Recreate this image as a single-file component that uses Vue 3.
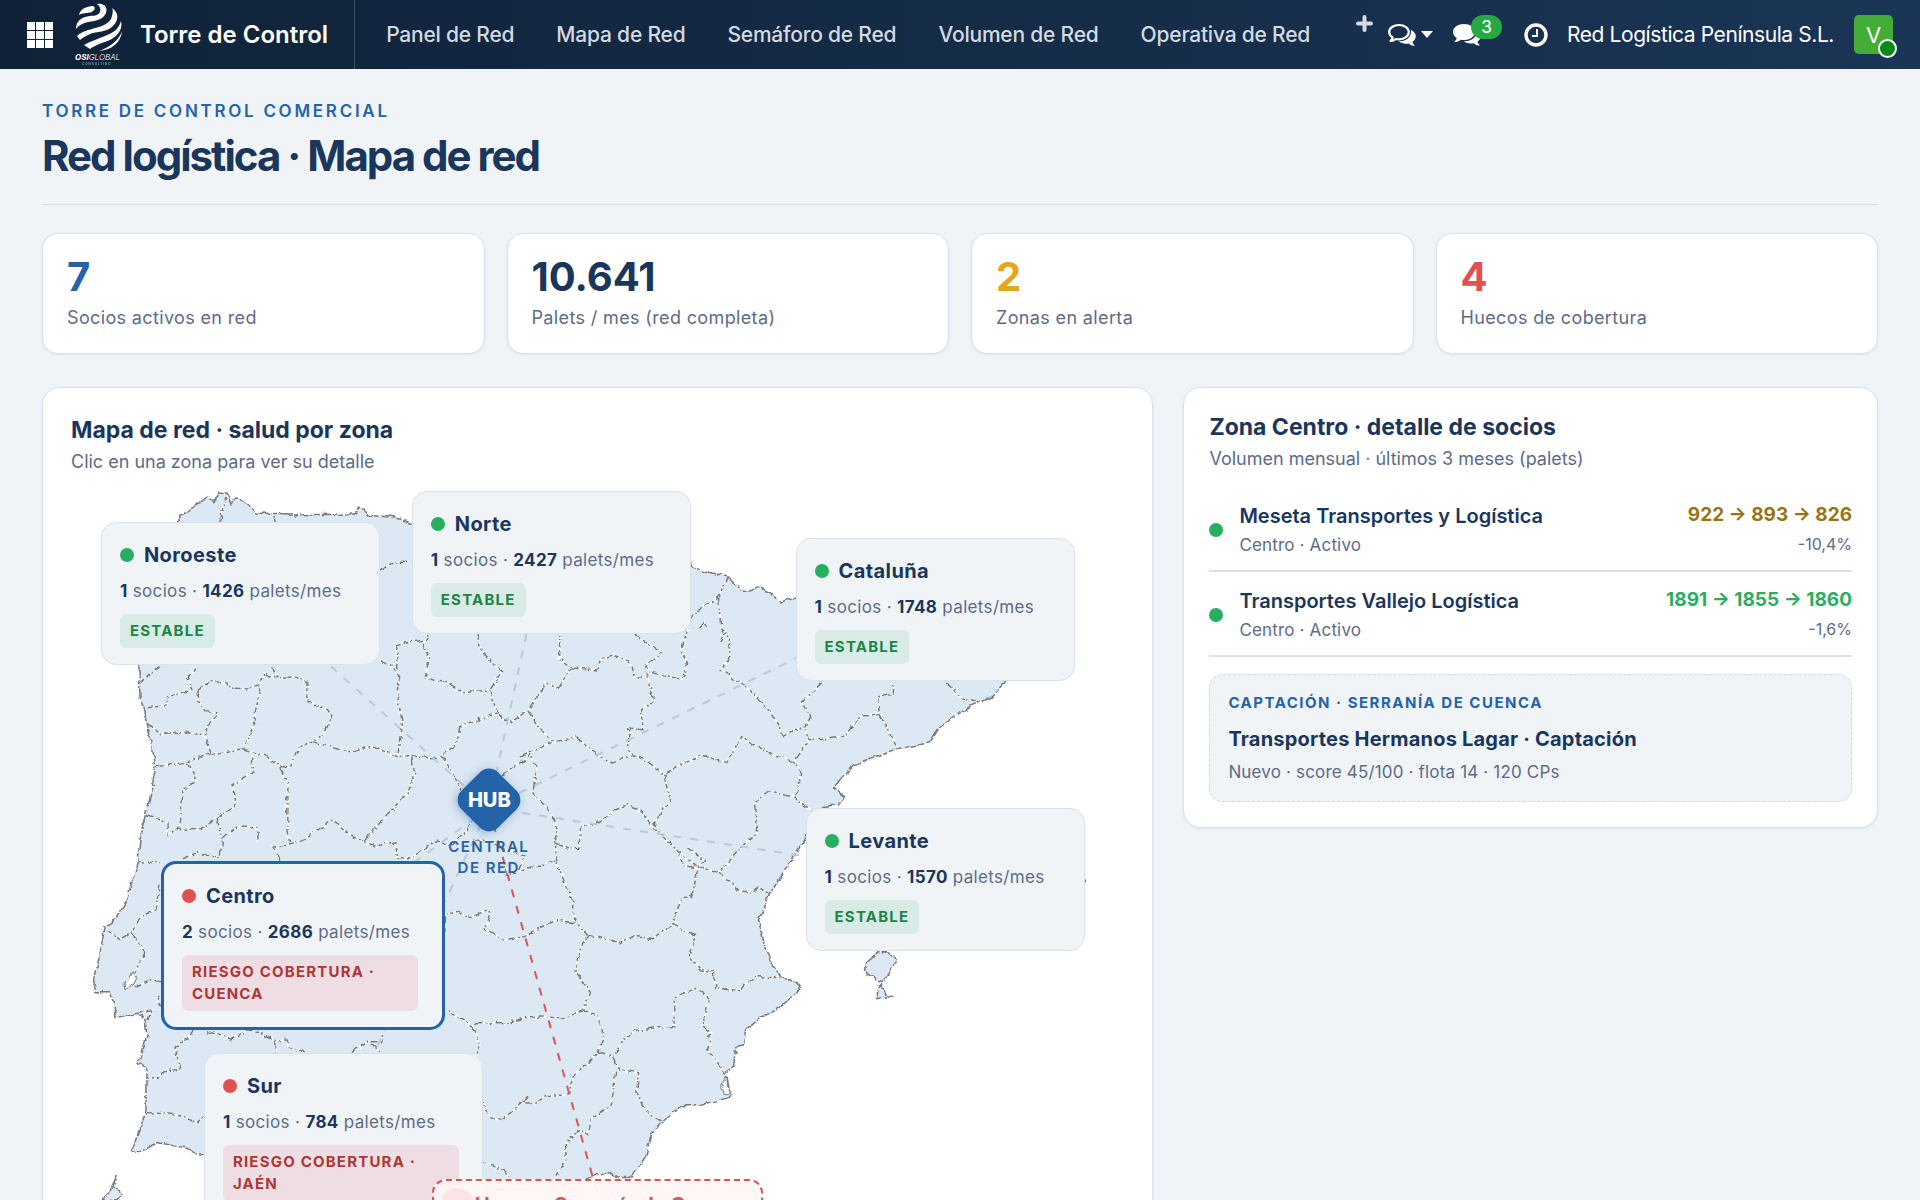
<script setup>
import { ref } from 'vue'

const menu = ['Panel de Red', 'Mapa de Red', 'Semáforo de Red', 'Volumen de Red', 'Operativa de Red']

const kpis = [
  { value: '7', label: 'Socios activos en red', tone: 'blue' },
  { value: '10.641', label: 'Palets / mes (red completa)', tone: 'navy' },
  { value: '2', label: 'Zonas en alerta', tone: 'amber' },
  { value: '4', label: 'Huecos de cobertura', tone: 'red' }
]

// Map canvas, in the same units as the SVG viewBox
const view = { x: 71, y: 485, w: 1054, h: 840 }

const zones = [
  { name: 'Noroeste', partners: 1, pallets: 1426, status: 'Estable', tone: 'ok', x: 101, y: 522 },
  { name: 'Norte', partners: 1, pallets: 2427, status: 'Estable', tone: 'ok', x: 412, y: 491 },
  { name: 'Cataluña', partners: 1, pallets: 1748, status: 'Estable', tone: 'ok', x: 796, y: 538 },
  { name: 'Levante', partners: 1, pallets: 1570, status: 'Estable', tone: 'ok', x: 806, y: 808 },
  { name: 'Centro', partners: 2, pallets: 2686, status: 'Riesgo cobertura · Cuenca', tone: 'risk', x: 161, y: 861 },
  { name: 'Sur', partners: 1, pallets: 784, status: 'Riesgo cobertura · Jaén', tone: 'risk', x: 204, y: 1053 }
]
const selected = ref('Centro')

const hub = { x: 489, y: 808 }
const links = [[240, 585], [527, 633], [900, 608], [900, 871], [302, 945], [334, 1140]]

const place = (p) => ({
  left: ((p.x - view.x) / view.w) * 100 + '%',
  top: ((p.y - view.y) / view.h) * 100 + '%'
})

const land = '179,522 179,515 188,512 197,505 202,500 208,497 213,502 220,493 227,494 231,503 236,498 242,500 252,507 258,514 290,515 353,514 360,507 368,515 388,517 400,519 410,523 470,530 560,540 640,550 691,562 692,567 711,574 729,577 742,590 750,591 759,587 771,593 780,602 796,597 900,620 1020,640 1012,670 1006,683 990,699 979,703 956,716 941,726 930,743 897,749 872,758 854,765 843,777 834,788 845,797 838,805 822,807 805,840 794,857 782,877 769,895 759,920 765,947 773,967 782,978 796,982 800,990 780,1008 761,1017 746,1030 744,1045 736,1047 734,1065 727,1073 730,1093 732,1097 715,1102 700,1105 683,1105 662,1122 652,1133 646,1157 639,1167 631,1178 619,1178 612,1173 604,1174 595,1176 570,1185 540,1182 510,1186 470,1200 400,1240 330,1230 280,1190 203,1154 183,1148 158,1143 137,1154 132,1153 138,1137 146,1112 146,1067 139,1063 147,1037 145,1020 137,1013 116,1018 115,1003 110,993 96,993 94,983 98,963 105,928 103,927 113,922 125,905 132,883 138,862 140,840 147,813 156,767 148,727 140,697 139,667 130,600 150,560'

const islands = [
  '887,952 897,960 889,975 880,982 869,975 865,970 867,963 880,952',
  '882,983 882,988 888,997 877,999 878,992',
  '117,1177 113,1188 123,1193 117,1200 102,1202 109,1194',
  '1085,878 1086,880 1084,880'
]

const borders = [
  '220,522 221,512 225,498', '273,517 275,524', '380,569 393,563 410,562',
  '140,684 152,673 160,667', '147,708 165,706 168,697 192,690 188,680 196,667',
  '197,691 210,682 227,682 233,688 247,689 260,686 263,673 273,678 293,677 307,680 307,702 323,707 333,715 325,732 313,742',
  '273,667 277,677', '197,691 198,702 207,712 216,713 205,733 211,754 243,749 253,727 260,688',
  '147,723 160,735 190,732 205,737', '157,767 188,762 211,754',
  '188,762 196,780 183,792 180,829 198,830 217,818 235,807 233,785 252,773 253,755',
  '147,815 167,823 168,835 179,828', '243,749 265,756 280,767 290,767 300,747 313,742',
  '313,742 350,753 373,746 398,757 402,720 397,693 400,677 390,665 378,660',
  '397,670 397,647 413,642 427,640 427,633',
  '423,643 430,657 425,678 447,683 463,693 490,690 497,713 460,727 457,743 442,757 430,758 413,755 398,757',
  '477,633 482,653 503,672 490,690', '497,713 512,723 528,712 547,683 558,688 572,668 560,660 560,635',
  '442,757 457,780 462,793', '412,757 415,773 408,793 385,817 367,837',
  '280,768 288,783 288,830 290,846', '217,818 223,838 237,827 257,828 257,842',
  '280,860 273,847 290,845 305,840 332,820 353,837 377,847 395,843 397,858 413,858 437,840 450,847 467,830 472,820',
  '365,842 385,817', '502,775 530,755 537,770 533,792 545,806 556,820 556,843 556,862 574,903 574,923 589,935',
  '528,712 540,728 553,742 577,738 610,763 635,755 648,762 665,775 700,755 727,762 742,737 753,743 775,756 794,762',
  '520,757 553,742', '646,672 654,700 642,710 642,730 629,728 629,753 635,756',
  '572,668 597,670 602,658 614,655 629,662 635,677 648,677',
  '635,635 662,652 646,667 650,672 681,679 688,665 681,647 688,630 692,615 719,597 729,577',
  '719,597 721,627 730,635 729,660 721,670 746,687 771,712 784,735 803,728',
  '699,627 705,622 708,628', '720,643 726,632 731,638',
  '822,683 803,702 811,717 805,728 809,740 794,762 801,773 799,790 794,797',
  '809,740 845,736 862,715 880,715 878,697 893,693 893,683', '880,715 893,738 897,749',
  '947,683 962,698 979,703', '665,775 671,800 660,813 654,828',
  '556,843 570,849 579,850 581,827 598,823 612,812 629,804 642,812 654,828 677,850 698,868 721,872 742,847 757,833 755,803 769,792 794,797 811,810',
  '677,850 684,866 698,868', '688,848 706,862 698,868', '719,873 738,890 750,893 759,887 769,893',
  '698,870 692,897 681,900 673,925 696,935 690,957 700,970 715,972 715,988 740,992 745,985 757,977 782,978',
  '555,862 535,866 520,872', '574,923 558,920 540,928 525,937 503,940 485,930 492,912 483,912 472,918 457,912 445,915 444,933',
  '589,935 620,943 635,935 652,940 673,925',
  '589,935 579,953 575,972 591,993 583,1010 566,1018 530,1017 507,1023 477,1023 473,1027 460,1018 445,1010',
  '583,1010 598,1015 604,1037 598,1053 574,1077 570,1095 547,1097 535,1103 520,1104 528,1098 503,1120 490,1117 483,1102',
  '598,1053 614,1058 623,1040 635,1032 658,1027 673,1028 675,997 696,989 709,998 704,1027 711,1033 708,1050 727,1075',
  '614,1058 620,1070 639,1073 637,1093 648,1113 662,1122',
  '616,1072 612,1105 591,1120 589,1135 577,1130 564,1147 566,1160 556,1178',
  '138,862 160,863', '182,860 198,853 220,857 223,838',
  '473,840 490,842 513,853 525,857 518,872 507,877 503,867', '527,868 555,862',
  '160,885 155,910 140,918 132,933 120,940 108,932', '132,933 145,953 135,973',
  '135,987 150,980 160,982', '160,995 157,1003 160,1008', '137,1013 152,1010 148,1020 141,1015',
  '193,1030 190,1038 175,1048 180,1070 163,1071 157,1080 147,1077',
  '147,1113 177,1115 197,1123 204,1117', '208,1032 233,1040 247,1030 260,1032 275,1042 287,1040 290,1048 305,1052',
  '275,1042 275,1053', '353,1052 367,1042 382,1042 383,1032', '372,1044 380,1052',
  '473,1027 480,1045 475,1056', '483,1161 497,1167 510,1177', '888,997 896,998'
]

const partners = [
  { name: 'Meseta Transportes y Logística', meta: 'Centro · Activo', trend: '922 → 893 → 826', delta: '-10,4%', tone: 'warn' },
  { name: 'Transportes Vallejo Logística', meta: 'Centro · Activo', trend: '1891 → 1855 → 1860', delta: '-1,6%', tone: 'good' }
]
</script>

<template>
  <div class="app">
    <header class="topbar">
      <button class="icon-btn apps" aria-label="Aplicaciones">
        <svg width="26" height="26" viewBox="0 0 26 26" fill="#fff">
          <template v-for="r in 3" :key="r">
            <rect v-for="c in 3" :key="c" :x="(c - 1) * 9" :y="(r - 1) * 9" width="8" height="8" />
          </template>
        </svg>
      </button>
      <svg class="logo" width="50" height="64" viewBox="74 3 50 64" fill="#fff" role="img" aria-label="OSI Global Consulting">
        <path d="M79 15C80 10 84 7 92 6C95 6 96 9 93 11C90 14 84 12 79 15Z" />
        <path d="M97 4C104 3 108 7 106 13C103 20 95 21 88 22C83 23 79 25 76 29C76 23 79 19 85 17C91 15 98 17 100 12C101 9 100 6 97 4Z" />
        <path d="M112 8C119 13 119 20 113 26C106 33 97 31 90 34C86 36 82 38 80 40L77 36C82 31 89 30 95 28C104 26 111 22 112 16C113 12 113 10 112 8Z" />
        <path d="M121 21C123 29 118 36 110 40C103 43 97 44 90 49L84 45C91 41 98 39 105 36C113 33 119 29 121 21Z" />
        <path d="M122 31C121 42 112 50 99 51C108 48 119 41 122 31Z" />
        <text x="75" y="60" font-size="8" font-style="italic" font-family="Inter, sans-serif"><tspan font-weight="700">OSI</tspan><tspan font-weight="300">GLOBAL</tspan></text>
        <text x="82" y="65" font-size="3" letter-spacing="1" opacity=".7" font-family="Inter, sans-serif">CONSULTING</text>
      </svg>
      <a href="#" class="brand">Torre de Control</a>
      <nav class="menu">
        <a v-for="m in menu" :key="m" href="#">{{ m }}</a>
      </nav>
      <div class="tools">
        <button class="icon-btn plus" aria-label="Nuevo">
          <svg width="17" height="17" viewBox="0 0 17 17"><path d="M8.500 2v13M2 8.500h13" stroke="#d3dae2" stroke-width="4" stroke-linecap="round" /></svg>
        </button>
        <button class="icon-btn chats" aria-label="Conversaciones">
          <svg width="28" height="24" viewBox="0 0 28 24">
            <path d="M11 2C5.500 2 1.200 5 1.200 9c0 2.200 1.400 4.200 3.500 5.500C4.500 16 3.500 17 2.500 18c2.200 0 4-.8 5.500-2 1 .2 2 .3 3 .3 5.500 0 9.800-3.200 9.800-7.200S16.500 2 11 2Z" fill="none" stroke="#fff" stroke-width="2.200" stroke-linejoin="round" />
            <path d="M23 7c3 1.400 4.800 3.600 4.800 6.200 0 2.200-1.300 4.200-3.300 5.500.3 1.600 1.200 2.800 2.500 4-2.600 0-4.800-.9-6.300-2.300-4 .7-7.600-.2-10-2.200C18 18.500 24 14 23 7Z" fill="#fff" />
          </svg>
          <svg width="12" height="7" viewBox="0 0 12 7"><path d="M0 0h12L6 7Z" fill="#fff" /></svg>
        </button>
        <button class="icon-btn messages" aria-label="Mensajes">
          <svg width="28" height="24" viewBox="0 0 28 24" fill="#fff">
            <path d="M11 1C5 1 0 4.500 0 9c0 2.400 1.400 4.500 3.700 6C3.500 16.500 2.500 17.600 1.200 19c2.600 0 5-.9 6.600-2.300 1 .2 2.100.3 3.200.3 6 0 11-3.500 11-8S17 1 11 1Z" />
            <path d="M23.800 7c2.500 1.400 4 3.500 4 6 0 2.300-1.300 4.300-3.300 5.600.3 1.600 1.200 2.800 2.500 4-2.600 0-4.800-.9-6.300-2.300-4 .7-7.600-.2-10-2C18.500 18.600 24.500 14 23.800 7Z" />
          </svg>
          <span class="count">3</span>
        </button>
        <button class="icon-btn clock" aria-label="Actividades">
          <svg width="24" height="24" viewBox="0 0 24 24" fill="none" stroke="#fff"><circle cx="12" cy="12" r="10" stroke-width="3.400" /><path d="M13 6v7H8" stroke-width="2" /></svg>
        </button>
        <a href="#" class="company">Red Logística Península S.L.</a>
        <button class="avatar" aria-label="Usuario">V<span class="online"></span></button>
      </div>
    </header>

    <main class="page">
      <div class="heading">
        <p class="eyebrow">Torre de control comercial</p>
        <h1>Red logística · Mapa de red</h1>
      </div>

      <section class="kpis">
        <article v-for="k in kpis" :key="k.label" class="kpi">
          <strong :class="k.tone">{{ k.value }}</strong>
          <span>{{ k.label }}</span>
        </article>
      </section>

      <div class="columns">
        <section class="panel map-panel">
          <h2>Mapa de red · salud por zona</h2>
          <p class="sub">Clic en una zona para ver su detalle</p>
          <div class="stage">
            <svg class="map" :viewBox="`${view.x} ${view.y} ${view.w} ${view.h}`" aria-hidden="true">
              <defs>
                <filter id="crinkle" x="-5%" y="-5%" width="110%" height="110%">
                  <feTurbulence type="fractalNoise" baseFrequency="0.1" numOctaves="3" seed="4" />
                  <feDisplacementMap in="SourceGraphic" scale="6" xChannelSelector="R" yChannelSelector="G" />
                </filter>
              </defs>
              <g filter="url(#crinkle)" stroke-linejoin="round">
                <polygon class="land" :points="land" />
                <polygon v-for="i in islands" :key="i" class="land" :points="i" />
                <polygon class="water" points="133,971 137,978 134,984 125,989 124,983 129,979" />
                <polygon class="water" points="727,1075 721,1087 724,1095 731,1095 728,1085" />
                <g v-for="b in borders" :key="b">
                  <polyline class="halo" :points="b" />
                  <polyline class="border" :points="b" />
                </g>
              </g>
              <line v-for="l in links" :key="l[0] + '-' + l[1]" class="link" :x1="hub.x" :y1="hub.y" :x2="l[0]" :y2="l[1]" />
              <line class="link gap" :x1="hub.x" :y1="hub.y" x2="605" y2="1220" />
            </svg>

            <div class="hub" :style="place({ x: 489, y: 801 })">
              <div class="diamond"><b>HUB</b></div>
              <span>Central de red</span>
            </div>

            <button
              v-for="z in zones"
              :key="z.name"
              class="zone"
              :class="[z.tone, { selected: selected === z.name }]"
              :style="place(z)"
              @click="selected = z.name"
            >
              <span class="zone-name"><i class="dot"></i>{{ z.name }}</span>
              <span class="zone-meta"><b>{{ z.partners }}</b> socios · <b>{{ z.pallets }}</b> palets/mes</span>
              <span class="badge">{{ z.status }}</span>
            </button>

            <button class="uncovered" :style="place({ x: 432, y: 1179 })">
              <i class="pulse"></i>
              <b>Hueco · Serranía de Cuenca</b>
            </button>
          </div>
        </section>

        <section class="panel detail">
          <h2>Zona Centro · detalle de socios</h2>
          <p class="sub">Volumen mensual · últimos 3 meses (palets)</p>
          <ul>
            <li v-for="p in partners" :key="p.name">
              <i class="dot"></i>
              <div class="who">
                <strong>{{ p.name }}</strong>
                <span>{{ p.meta }}</span>
              </div>
              <div class="trend" :class="p.tone">
                <strong>{{ p.trend }}</strong>
                <span>{{ p.delta }}</span>
              </div>
            </li>
          </ul>
          <div class="lead">
            <p class="lead-tag">Captación · Serranía de Cuenca</p>
            <strong>Transportes Hermanos Lagar · Captación</strong>
            <span>Nuevo · score 45/100 · flota 14 · 120 CPs</span>
          </div>
        </section>
      </div>
    </main>
  </div>
</template>

<style>
body {
  background: #f0f4f7;
}
</style>

<style scoped>
* {
  box-sizing: border-box;
}
.app {
  display: flex;
  flex-direction: column;
  height: 100vh;
  font-family: Inter, 'Noto Sans', sans-serif;
  color: #1a365d;
  background: #f0f4f7;
}
h1, h2, p, ul {
  margin: 0;
  padding: 0;
}
a {
  color: inherit;
  text-decoration: none;
}
button {
  font: inherit;
  color: inherit;
  cursor: pointer;
}

.topbar {
  display: flex;
  flex: none;
  align-items: center;
  height: 69px;
  padding: 0 27px;
  color: #fff;
  background: linear-gradient(90deg, #0f2238, #1a3555);
}
.icon-btn {
  display: flex;
  align-items: center;
  padding: 0;
  border: 0;
  background: none;
}
.logo {
  margin: 0 16px 0 21px;
}
.brand {
  font-size: 24px;
  font-weight: 600;
  padding-right: 26px;
  line-height: 69px;
  border-right: 1px solid #3a4c60;
}
.menu {
  display: flex;
  gap: 42px;
  padding-left: 31px;
  font-size: 21px;
  font-weight: 500;
  letter-spacing: -0.01em;
  color: #d3dae2;
  white-space: nowrap;
}
.tools {
  display: flex;
  align-items: center;
  margin-left: auto;
  white-space: nowrap;
}
.plus {
  align-self: flex-start;
  margin-right: 15px;
}
.chats {
  gap: 5px;
  margin-right: 20px;
}
.messages {
  position: relative;
  margin-right: 43px;
}
.count {
  position: absolute;
  left: 18px;
  top: -8px;
  width: 31px;
  height: 24px;
  border-radius: 12px;
  background: #28a745;
  font-size: 17px;
  font-weight: 500;
  line-height: 24px;
}
.clock {
  margin-right: 19px;
}
.company {
  font-size: 21px;
  letter-spacing: -0.02em;
  margin-right: 20px;
}
.avatar {
  position: relative;
  width: 39px;
  height: 39px;
  padding: 0;
  border: 0;
  border-radius: 5px;
  background: #43ad36;
  color: #fff;
  font-size: 22px;
}
.online {
  position: absolute;
  right: -4px;
  bottom: -4px;
  width: 19px;
  height: 19px;
  border: 2px solid #fff;
  border-radius: 50%;
  background: #088a17;
}

.page {
  flex: 1;
  overflow-y: auto;
  scrollbar-width: none;
  padding: 30px 42px;
}
.heading {
  padding-bottom: 21px;
  border-bottom: 1px solid #d5dfe9;
}
.eyebrow {
  color: #2563a8;
  font-size: 17px;
  font-weight: 600;
  line-height: 24px;
  letter-spacing: 0.16em;
  text-transform: uppercase;
}
h1 {
  margin-top: 6px;
  font-size: 42px;
  font-weight: 700;
  line-height: 54px;
  letter-spacing: -2px;
}
.kpis {
  display: grid;
  grid-template-columns: repeat(4, 1fr);
  gap: 22px;
  margin: 28px 0 33px;
}
.kpi {
  display: flex;
  flex-direction: column;
  padding: 19px 24px 21px;
  border: 1px solid #d9e2ec;
  border-radius: 16px;
  background: #fff;
  box-shadow: 0 1px 3px rgba(26, 54, 93, 0.08);
}
.kpi strong {
  margin-bottom: 3px;
  font-size: 40px;
  font-weight: 700;
  line-height: 48px;
}
.kpi span {
  font-size: 18px;
  line-height: 28px;
  letter-spacing: 0.02em;
  color: #5d6b8a;
}
.blue { color: #2563a8; }
.amber { color: #e6a61c; }
.red { color: #e05252; }

.columns {
  display: grid;
  grid-template-columns: minmax(0, 8fr) minmax(0, 5fr);
  gap: 30px;
  align-items: start;
}
.panel {
  border: 1px solid #d9e2ec;
  border-radius: 18px;
  background: #fff;
  box-shadow: 0 1px 3px rgba(26, 54, 93, 0.08);
}
.map-panel {
  padding: 26px 28px;
}
.detail {
  padding: 23px 25px 25px;
}
h2 {
  font-size: 23px;
  font-weight: 700;
  line-height: 32px;
}
.sub {
  font-size: 18px;
  line-height: 32px;
  color: #5d6b8a;
}
.dot {
  flex: none;
  width: 14px;
  height: 14px;
  border-radius: 50%;
  background: #27ae60;
}

.stage {
  position: relative;
  margin-top: 7px;
}
.map {
  display: block;
  width: 100%;
}
.land {
  fill: #dce8f3;
  stroke: #75787c;
  stroke-width: 1.5;
  stroke-dasharray: 14 1 5 2;
}
.water {
  fill: #fff;
  stroke: #75787c;
  stroke-width: 1;
}
.halo,
.border {
  fill: none;
  stroke: #fff;
  stroke-width: 2;
}
.border {
  stroke: #75787c;
  stroke-width: 1.5;
  stroke-dasharray: 7 3 4 2 2 3;
}
.link {
  stroke: #b9c9dc;
  stroke-width: 2;
  stroke-dasharray: 8 9;
}
.gap {
  stroke: #e05252;
}
.hub {
  position: absolute;
  display: flex;
  flex-direction: column;
  align-items: center;
  width: 100px;
  margin: -27px 0 0 -50px;
  text-align: center;
}
.diamond {
  display: flex;
  align-items: center;
  justify-content: center;
  width: 52px;
  height: 52px;
  border-radius: 13px;
  background: #2563a8;
  box-shadow: 0 2px 10px rgba(37, 99, 168, 0.4);
  transform: rotate(45deg);
}
.diamond b {
  color: #fff;
  font-size: 20px;
  font-weight: 800;
  transform: rotate(-45deg);
}
.hub span {
  margin-top: 10px;
  color: #2563a8;
  font-size: 15px;
  font-weight: 600;
  line-height: 21px;
  letter-spacing: 0.1em;
  text-transform: uppercase;
}
.zone {
  position: absolute;
  display: flex;
  flex-direction: column;
  align-items: flex-start;
  width: 279px;
  padding: 16px 18px;
  border: 1px solid #d9e2ec;
  border-radius: 15px;
  background: #f0f4f7;
  text-align: left;
}
.zone.selected {
  width: 284px;
  border: 3px solid #2563a8;
}
.zone-name {
  display: flex;
  align-items: center;
  gap: 10px;
  font-size: 20px;
  font-weight: 700;
  line-height: 32px;
  letter-spacing: 0.02em;
}
.zone-meta {
  margin-top: 7px;
  font-size: 17px;
  line-height: 26px;
  letter-spacing: 0.02em;
  color: #5d6b8a;
  white-space: nowrap;
}
.zone-meta b {
  color: #1a365d;
}
.badge {
  max-width: 236px;
  margin-top: 10px;
  padding: 6px 10px;
  border-radius: 6px;
  background: #d9ebe5;
  color: #1e8449;
  font-size: 15px;
  font-weight: 700;
  line-height: 22px;
  letter-spacing: 0.08em;
  text-transform: uppercase;
}
.risk .dot {
  background: #e05252;
}
.risk .badge {
  background: #eedee3;
  color: #b03535;
}
.uncovered {
  position: absolute;
  display: flex;
  align-items: center;
  gap: 1px;
  width: 331px;
  height: 52px;
  padding: 0 6px;
  border: 2px dashed #e05252;
  border-radius: 14px;
  background: rgba(255, 246, 246, 0.96);
  color: #e05252;
  font-size: 20px;
  white-space: nowrap;
}
.pulse {
  flex: none;
  width: 34px;
  height: 34px;
  border-radius: 50%;
  background: #fde3e3;
}

ul {
  list-style: none;
  margin-top: 12px;
}
li {
  display: flex;
  align-items: center;
  gap: 16px;
  padding: 14px 0 11px;
  border-bottom: 2px solid #d9e2ec;
}
.who,
.trend,
.lead {
  display: flex;
  flex-direction: column;
}
.who {
  flex: 1;
}
.who strong {
  font-size: 20px;
  font-weight: 600;
  line-height: 31px;
}
.who span {
  font-size: 17px;
  line-height: 27px;
  letter-spacing: 0.01em;
  color: #5d6b8a;
}
.trend {
  text-align: right;
}
.trend strong {
  font-size: 19px;
  font-weight: 700;
  line-height: 28px;
}
.trend span {
  font-size: 16px;
  line-height: 30px;
  color: #5d6b8a;
}
.warn strong { color: #9a7312; }
.good strong { color: #27ae60; }
.lead {
  margin-top: 17px;
  padding: 14px 18px;
  border: 1px dashed #d0dae5;
  border-radius: 14px;
  background: #f0f4f7;
}
.lead-tag {
  color: #2563a8;
  font-size: 15px;
  font-weight: 700;
  line-height: 28px;
  letter-spacing: 0.1em;
  text-transform: uppercase;
}
.lead strong {
  margin-top: 4px;
  font-size: 20px;
  font-weight: 700;
  line-height: 36px;
  letter-spacing: 0.01em;
}
.lead span {
  font-size: 17px;
  line-height: 30px;
  letter-spacing: 0.01em;
  color: #5d6b8a;
}
</style>
